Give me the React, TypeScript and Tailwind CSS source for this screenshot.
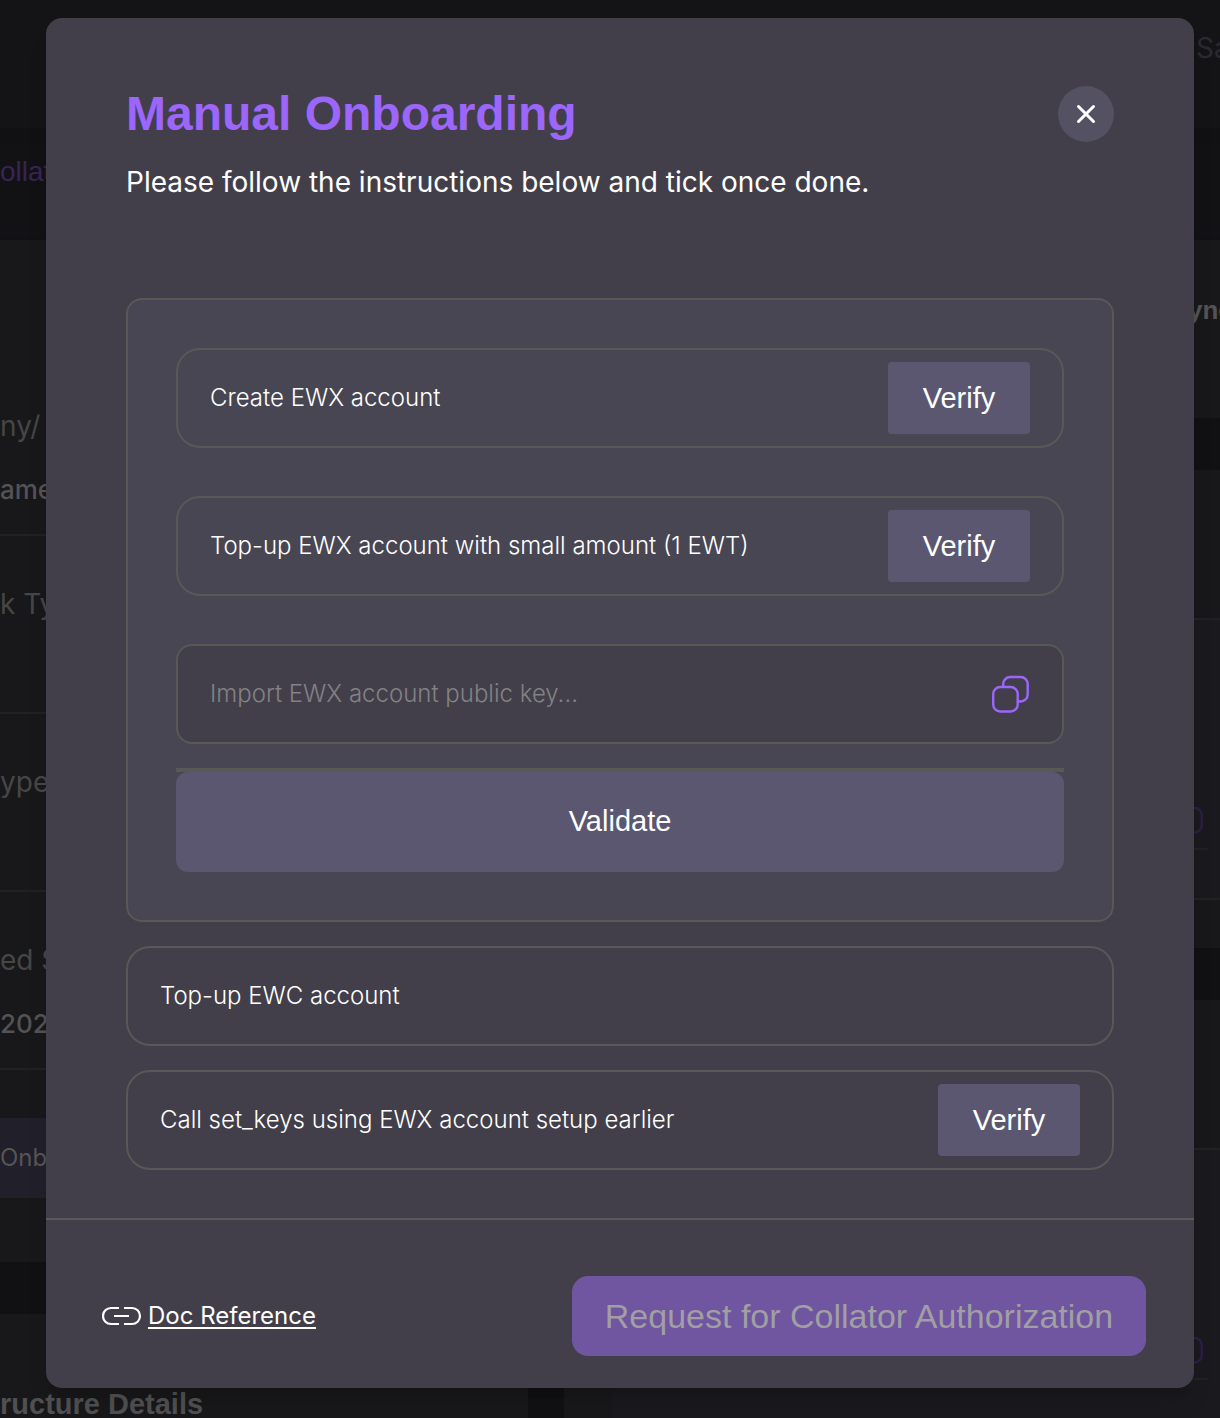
import type { ReactNode } from "react";

function CopyIcon({ className }: { className: string }) {
  return (
    <svg className={className} viewBox="0 0 38 38" fill="none" stroke="currentColor" strokeWidth="2.4" aria-hidden="true">
      <rect x="1.200" y="12" width="24.5" height="24.5" rx="7" />
      <path d="M11.200 12V9a7 7 0 0 1 7-7h10.500a7 7 0 0 1 7 7v10.500a7 7 0 0 1-7 7h-3" />
    </svg>
  );
}

function LinkIcon() {
  return (
    <svg className="h-5 w-10" viewBox="0 0 40 20" fill="none" stroke="currentColor" strokeWidth="2.2" aria-hidden="true">
      <path d="M17 2H9a8 8 0 0 0 0 16h8M22 2h8a8 8 0 0 1 0 16h-8M12 10h15" />
    </svg>
  );
}

function VerifyButton() {
  return (
    <button
      type="button"
      className="h-18 w-[142px] shrink-0 rounded-sm bg-[#5b5770] font-['Liberation_Sans',sans-serif] text-[29px] font-medium text-white"
    >
      Verify
    </button>
  );
}

function Step({ label, children }: { label: string; children?: ReactNode }) {
  return (
    <li className="flex h-25 items-center justify-between rounded-3xl border-2 border-[#585857] px-8 text-2xl font-light text-white">
      <span>{label}</span>
      {children}
    </li>
  );
}

function Field({ label, value }: { label: string; value?: string }) {
  return (
    <div className="flex h-[178px] flex-col gap-7 border-b-2 border-[#212123] pt-[50px] text-[28px] leading-9">
      <span className="text-[#464646]">{label}</span>
      {value && <span className="text-[26px] font-medium text-[#535355]">{value}</span>}
    </div>
  );
}

function KeyPanel() {
  return (
    <div className="flex h-[280px] flex-col items-end border-b-2 border-[#212121] bg-[#1a191e]">
      <div className="mr-3 flex h-[230px] w-120 items-end justify-end border-b-2 border-[#212121] pb-1">
        <CopyIcon className="mr-1 size-[38px] text-[#2b1f43]" />
      </div>
    </div>
  );
}

function Backdrop() {
  return (
    <div className="absolute inset-0 flex flex-col overflow-hidden bg-[#111113]" aria-hidden="true">
      <div className="flex h-32 shrink-0 justify-end bg-[#141416] pt-7 text-[28px] text-[#2b2933]">
        <span className="w-6 whitespace-nowrap leading-10">Sa</span>
      </div>
      <div className="mt-4 h-24 shrink-0 border-b-2 border-[#0e1115] bg-[#121214] pt-2 font-['Liberation_Sans',sans-serif] text-[28px] leading-10 text-[#382456]">
        ollat
      </div>
      <div className="flex gap-9">
        <div className="flex w-132 shrink-0 flex-col gap-[52px]">
          <div className="h-[1022px] bg-[#18181a] pt-[118px]">
            <Field label="ny/" value="ame" />
            <Field label="k Ty" />
            <Field label="ype" />
            <Field label="ed S" value="2024" />
            <div className="mt-12 flex h-20 items-center bg-[#211f29] text-2xl text-[#555557]">Onb</div>
          </div>
          <div className="h-40 bg-[#18181a] pt-[70px] font-['Liberation_Sans',sans-serif] text-[29px] font-bold leading-10 text-[#505052]">
            ructure Details
          </div>
        </div>
        <div className="flex flex-1 flex-col gap-[52px]">
          <div className="flex h-[178px] justify-end bg-[#18181a] pt-[50px] font-['Liberation_Sans',sans-serif] text-[26px] font-bold leading-10 text-[#535355]">
            <span className="w-8 whitespace-nowrap">yne</span>
          </div>
          <div className="h-[478px] bg-[#18181a] pl-12">
            <div className="h-[150px] border-b-2 border-[#212121]" />
            <KeyPanel />
          </div>
          <div className="h-120 bg-[#18181a] pl-12">
            <div className="h-[150px] border-b-2 border-[#212121]" />
            <KeyPanel />
          </div>
        </div>
      </div>
    </div>
  );
}

export default function App() {
  return (
    <div className="relative min-h-screen overflow-hidden pt-[18px] pr-[26px] pb-[30px] pl-[46px] font-['Inter',sans-serif]">
      <Backdrop />

      <div
        role="dialog"
        aria-modal="true"
        aria-labelledby="dialog-title"
        className="relative rounded-2xl bg-[#423f4a] shadow-xl"
      >
        <header className="flex items-start justify-between px-20 pt-17">
          <div>
            <h1
              id="dialog-title"
              className="font-['Liberation_Sans',sans-serif] text-5xl leading-14 font-bold text-[#9c66fa]"
            >
              Manual Onboarding
            </h1>
            <p className="mt-5 text-[28px] leading-10 text-white">
              Please follow the instructions below and tick once done.
            </p>
          </div>
          <button
            type="button"
            aria-label="Close"
            className="flex size-14 items-center justify-center rounded-full bg-[#545163] text-white"
          >
            <svg className="size-6" viewBox="0 0 24 24" fill="none" stroke="currentColor" strokeWidth="3" strokeLinecap="round">
              <path d="M4.500 4.500l15 15M19.500 4.500l-15 15" />
            </svg>
          </button>
        </header>

        <main className="flex flex-col gap-6 px-20 pt-24 pb-12">
          <section className="rounded-2xl border-2 border-[#585857] bg-[#494654] p-12">
            <ul className="flex flex-col gap-12">
              <Step label="Create EWX account">
                <VerifyButton />
              </Step>
              <Step label="Top-up EWX account with small amount (1 EWT)">
                <VerifyButton />
              </Step>
            </ul>
            <div className="mt-12 flex h-25 items-center rounded-2xl border-2 border-[#585857] bg-[#423f4a] px-8">
              <input
                type="text"
                aria-label="EWX account public key"
                placeholder="Import EWX account public key..."
                className="min-w-0 flex-1 bg-transparent text-2xl font-light text-white outline-none placeholder:text-[#828284]"
              />
              <button type="button" aria-label="Copy public key" className="text-[#9c66fa]">
                <CopyIcon className="size-[38px]" />
              </button>
            </div>
            <div className="mt-6 border-t-4 border-[#585857]">
              <button
                type="button"
                className="h-25 w-full rounded-xl bg-[#5b5770] font-['Liberation_Sans',sans-serif] text-[29px] font-medium text-white"
              >
                Validate
              </button>
            </div>
          </section>
          <ul className="flex flex-col gap-6">
            <Step label="Top-up EWC account" />
            <Step label="Call set_keys using EWX account setup earlier">
              <VerifyButton />
            </Step>
          </ul>
        </main>

        <footer className="flex items-center justify-between border-t-2 border-[#585857] pt-14 pr-12 pb-8 pl-14">
          <a href="#docs" className="flex items-center gap-1.5 text-2xl text-white">
            <LinkIcon />
            <span className="underline decoration-2 underline-offset-3">Doc Reference</span>
          </a>
          <button
            type="button"
            disabled
            className="h-20 w-[574px] rounded-2xl bg-[#7055a0] font-['Liberation_Sans',sans-serif] text-[34px] font-medium text-[#a09fa3]"
          >
            Request for Collator Authorization
          </button>
        </footer>
      </div>
    </div>
  );
}
